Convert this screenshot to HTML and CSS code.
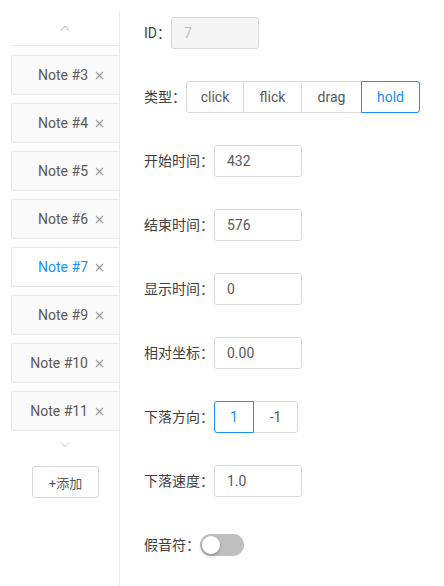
FILE: index.html
```html
<!DOCTYPE html>
<html>
<head>
<meta charset="utf-8">
<link rel="stylesheet" href="styles.css">
</head>
<body>
<div class="page">
  <aside class="sidebar">
    <div class="arrow-bar top">
      <svg width="10" height="6" viewBox="0 0 10 6"><path d="M1 5.5 L5 1 L9 5.5" fill="none" stroke="#aaa" stroke-width="1"/></svg>
    </div>
    <ul class="notes">
      <li class="note"><span>Note #3</span><svg class="x" width="9" height="9" viewBox="0 0 9 9"><path d="M1 1L8 8M8 1L1 8" stroke="#999" stroke-width="1.1"/></svg></li>
      <li class="note"><span>Note #4</span><svg class="x" width="9" height="9" viewBox="0 0 9 9"><path d="M1 1L8 8M8 1L1 8" stroke="#999" stroke-width="1.1"/></svg></li>
      <li class="note"><span>Note #5</span><svg class="x" width="9" height="9" viewBox="0 0 9 9"><path d="M1 1L8 8M8 1L1 8" stroke="#999" stroke-width="1.1"/></svg></li>
      <li class="note"><span>Note #6</span><svg class="x" width="9" height="9" viewBox="0 0 9 9"><path d="M1 1L8 8M8 1L1 8" stroke="#999" stroke-width="1.1"/></svg></li>
      <li class="note active"><span>Note #7</span><svg class="x" width="9" height="9" viewBox="0 0 9 9"><path d="M1 1L8 8M8 1L1 8" stroke="#999" stroke-width="1.1"/></svg></li>
      <li class="note"><span>Note #9</span><svg class="x" width="9" height="9" viewBox="0 0 9 9"><path d="M1 1L8 8M8 1L1 8" stroke="#999" stroke-width="1.1"/></svg></li>
      <li class="note"><span>Note #10</span><svg class="x" width="9" height="9" viewBox="0 0 9 9"><path d="M1 1L8 8M8 1L1 8" stroke="#999" stroke-width="1.1"/></svg></li>
      <li class="note"><span>Note #11</span><svg class="x" width="9" height="9" viewBox="0 0 9 9"><path d="M1 1L8 8M8 1L1 8" stroke="#999" stroke-width="1.1"/></svg></li>
    </ul>
    <div class="arrow-bar bottom">
      <svg width="10" height="6" viewBox="0 0 10 6"><path d="M1 0.5 L5 5 L9 0.5" fill="none" stroke="#ccc" stroke-width="1"/></svg>
    </div>
    <div class="add-wrap"><button class="add-btn">+添加</button></div>
  </aside>
  <main class="form">
    <div class="row">
      <label class="lbl">ID：</label>
      <div class="input disabled">7</div>
    </div>
    <div class="row">
      <label class="lbl">类型：</label>
      <div class="seg">
        <span class="seg-btn w58">click</span><span class="seg-btn w59">flick</span><span class="seg-btn w61">drag</span><span class="seg-btn w59 on">hold</span>
      </div>
    </div>
    <div class="row">
      <label class="lbl">开始时间：</label>
      <div class="input">432</div>
    </div>
    <div class="row">
      <label class="lbl">结束时间：</label>
      <div class="input">576</div>
    </div>
    <div class="row">
      <label class="lbl">显示时间：</label>
      <div class="input">0</div>
    </div>
    <div class="row">
      <label class="lbl">相对坐标：</label>
      <div class="input">0.00</div>
    </div>
    <div class="row">
      <label class="lbl">下落方向：</label>
      <div class="seg">
        <span class="seg-btn w40 on">1</span><span class="seg-btn w45">-1</span>
      </div>
    </div>
    <div class="row">
      <label class="lbl">下落速度：</label>
      <div class="input">1.0</div>
    </div>
    <div class="row toggle-row">
      <label class="lbl">假音符：</label>
      <span class="switch"><span class="knob"></span></span>
    </div>
  </main>
</div>
</body>
</html>
```
FILE: styles.css
```css
* { box-sizing: border-box; }
html, body { margin: 0; padding: 0; background: #fff; }
body {
  font-family: Roboto, "Noto Sans CJK SC", sans-serif;
  font-size: 14px;
  color: #595959;
}
.page {
  display: flex;
  height: 586px;
  padding-top: 12px;
}
.sidebar {
  width: 120px;
  padding-left: 11px;
  border-right: 1px solid #ebebeb;
  overflow: hidden;
  flex-shrink: 0;
}
.arrow-bar {
  display: flex;
  justify-content: center;
  align-items: center;
}
.arrow-bar.top {
  height: 34px;
  border-bottom: 1px solid #ebebeb;
  padding-bottom: 2px;
}
.arrow-bar.bottom {
  height: 27px;
}
.notes {
  list-style: none;
  margin: 9px 0 0;
  padding: 0;
  display: flex;
  flex-direction: column;
  gap: 8px;
}
.note {
  height: 40px;
  width: 116px;
  background: #fafafa;
  border: 1px solid #e8e8e8;
  border-radius: 2px;
  display: flex;
  align-items: center;
  justify-content: flex-end;
  padding-right: 22px;
  gap: 7px;
  color: #595959;
}
.note.active {
  background: #fff;
  color: #1890ff;
}
.note .x { flex-shrink: 0; }
.add-wrap {
  display: flex;
  padding-left: 21px;
  margin-top: 8px;
}
.add-btn {
  font-family: Roboto, "Noto Sans CJK SC", sans-serif;
  font-size: 13px;
  color: #595959;
  background: #fff;
  border: 1px solid #d9d9d9;
  border-radius: 3px;
  width: 67px;
  height: 32px;
  padding: 0;
}
.form {
  padding-left: 24px;
  padding-top: 5px;
  display: flex;
  flex-direction: column;
  gap: 32px;
}
.row {
  display: flex;
  align-items: center;
  height: 32px;
}
.lbl {
  color: #404040;
  white-space: nowrap;
  position: relative;
  top: -1px;
}
.input {
  width: 88px;
  height: 32px;
  border: 1px solid #d9d9d9;
  border-radius: 3px;
  padding-left: 12px;
  display: flex;
  align-items: center;
  color: #595959;
}
.input.disabled {
  background: #f5f5f5;
  color: #bfbfbf;
}
.seg { display: flex; }
.seg-btn {
  height: 32px;
  padding: 0;
  display: flex;
  align-items: center;
  justify-content: center;
  border: 1px solid #d9d9d9;
  margin-left: -1px;
  color: #595959;
  background: #fff;
}
.seg-btn.w58 { width: 58px; }
.seg-btn.w59 { width: 59px; }
.seg-btn.w61 { width: 61px; }
.seg-btn.w40 { width: 40px; }
.seg-btn.w45 { width: 45px; }
.seg-btn:first-child { margin-left: 0; border-radius: 3px 0 0 3px; }
.seg-btn:last-child { border-radius: 0 3px 3px 0; }
.seg-btn.on {
  color: #1890ff;
  border-color: #1890ff;
  position: relative;
  z-index: 1;
}
.switch {
  width: 44px;
  height: 22px;
  border-radius: 11px;
  background: #bfbfbf;
  display: flex;
  align-items: center;
  padding-left: 2px;
}
.knob {
  width: 18px;
  height: 18px;
  border-radius: 50%;
  background: #fff;
  box-shadow: 0 2px 4px rgba(0,35,11,0.25);
}
```
